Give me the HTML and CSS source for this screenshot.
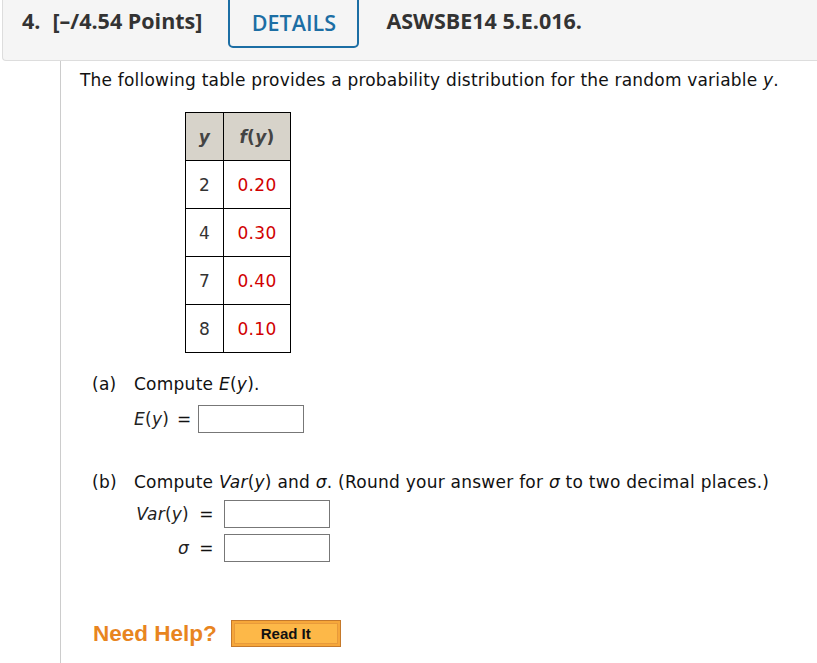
FILE: index.html
```html
<!DOCTYPE html>
<html>
<head>
<meta charset="utf-8">
<link rel="stylesheet" href="styles.css">
</head>
<body>
<div class="page">
  <div class="header">
    <span class="qnum">4.</span>
    <span class="points">[–/4.54 Points]</span>
    <span class="tab">DETAILS</span>
    <span class="code">ASWSBE14 5.E.016.</span>
  </div>
  <div class="content">
    <p class="intro">The following table provides a probability distribution for the random variable <i>y</i>.</p>
    <table class="dist">
      <tr class="head"><th class="c1"><i>y</i></th><th class="c2"><i>f</i>(<i>y</i>)</th></tr>
      <tr><td class="c1">2</td><td class="c2 red">0.20</td></tr>
      <tr><td class="c1">4</td><td class="c2 red">0.30</td></tr>
      <tr><td class="c1">7</td><td class="c2 red">0.40</td></tr>
      <tr><td class="c1">8</td><td class="c2 red">0.10</td></tr>
    </table>
    <div class="part pa">
      <div class="ptitle"><span class="lbl">(a)</span><span>Compute <i>E</i>(<i>y</i>).</span></div>
      <div class="row ra"><span class="var"><i>E</i>(<i>y</i>)</span><span class="eq">=</span><span class="box"></span></div>
    </div>
    <div class="part pb">
      <div class="ptitle"><span class="lbl">(b)</span><span>Compute <i>Var</i>(<i>y</i>) and <i>σ</i>. (Round your answer for <i>σ</i> to two decimal places.)</span></div>
      <div class="grid">
        <span class="var r"><i>Var</i>(<i>y</i>)</span><span class="eq">=</span><span class="box"></span>
        <span class="var r"><i>σ</i></span><span class="eq">=</span><span class="box"></span>
      </div>
    </div>
    <div class="help">
      <span class="need">Need Help?</span>
      <span class="readit"><span class="inner">Read It</span></span>
    </div>
  </div>
</div>
</body>
</html>
```
FILE: styles.css
```css
html, body { margin: 0; padding: 0; background: #fff; }
.page { width: 817px; height: 663px; overflow: hidden; }
.header {
  margin-left: 2px;
  height: 60px;
  background: #f5f5f5;
  border-left: 1px solid #ddd;
  border-bottom: 1px solid #ddd;
  border-bottom-left-radius: 4px;
  display: flex;
  align-items: flex-start;
  font-family: "Open Sans", sans-serif;
  font-weight: 700;
  font-size: 21.5px;
  color: #333;
}
.qnum { margin-left: 19px; margin-top: 6px; }
.points { margin-left: 12px; margin-top: 6px; }
.tab {
  margin-left: 26px;
  margin-top: -2px;
  width: 131px;
  height: 50px;
  box-sizing: border-box;
  border: 2px solid #1c6ea4;
  border-radius: 0 0 5px 5px;
  color: #1c6ea4;
  font-weight: 600;
  display: flex;
  justify-content: center;
  padding-top: 8px;
}
.code { margin-left: 27px; margin-top: 6px; }

.content {
  margin-left: 60px;
  border-left: 1px solid #ccc;
  height: 602px;
  font-family: "DejaVu Sans", Verdana, sans-serif;
  font-size: 17px;
  color: #111;
  padding-left: 19px;
}
.intro { margin: 0; padding-top: 8px; line-height: 22px; letter-spacing: 0.2px; }
.dist {
  margin-top: 21px;
  margin-left: 105px;
  border-collapse: collapse;
  font-size: 17px;
  letter-spacing: 0.3px;
}
.dist th, .dist td {
  border: 1.5px solid #000;
  text-align: center;
  height: 47px;
  padding: 0;
}
.dist .c1 { width: 37px; }
.dist .c2 { width: 66px; }
.dist .head th { background: #d7d3ca; color: #444; font-weight: 700; }
.dist td { color: #333; }
.dist td.red { color: #d10000; }
.part { letter-spacing: 0.25px; }
.pa { margin-top: 20px; }
.ptitle { display: flex; line-height: 22px; }
.lbl { width: 42px; margin-left: 12px; flex: none; }
.ra { display: flex; align-items: center; margin-left: 54px; margin-top: 10px; }
.var { color: #222; }
.eq { margin: 0 6px 0 8px; }
.box {
  display: inline-block;
  width: 104px;
  height: 26px;
  border: 1px solid #777;
  background: #fff;
}
.pb { margin-top: 38px; }
.grid {
  display: grid;
  grid-template-columns: 55px 35px 108px;
  margin-left: 54px;
  margin-top: 7px;
  row-gap: 6px;
  align-items: center;
}
.grid .r { text-align: right; }
.grid .eq { margin: 0; text-align: center; }
.help {
  margin-top: 58px;
  margin-left: 13px;
  display: flex;
  align-items: center;
  font-family: "Liberation Sans", Arial, sans-serif;
}
.need { color: #e8851f; font-weight: 700; font-size: 22.5px; }
.readit {
  margin-left: 14px;
  width: 110px;
  height: 27px;
  box-sizing: border-box;
  background: #f6a73a;
  border: 1px solid #c5792b;
  padding: 2px;
  display: flex;
}
.readit .inner {
  flex: 1;
  background: #fdb848;
  border: 1px solid #e89a3b;
  font-size: 15px;
  font-weight: 700;
  color: #111;
  display: flex;
  align-items: center;
  justify-content: center;
}
```
